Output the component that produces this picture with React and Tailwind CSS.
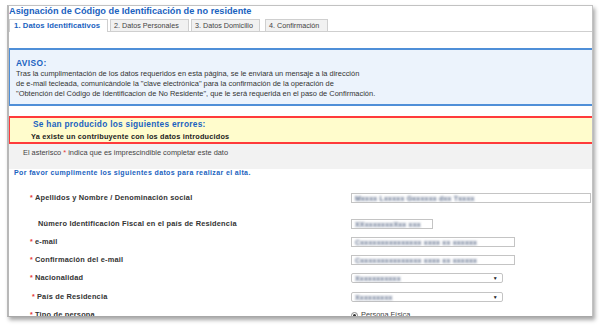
export default function App() {
  const Star = ({ cls = "" }) => (
    <span className={"text-[#e53935] text-[7px] leading-none mr-[2px] relative -top-[1px] " + cls}>*</span>
  );
  const Input = ({ w, text }) => (
    <div className={"h-[10px] border border-[#c4c4c4] bg-white flex items-center pl-[3px] overflow-hidden " + w}>
      <span className="blur-[0.9px] text-[#5a6a88] text-[7px] leading-none whitespace-nowrap">{text}</span>
    </div>
  );
  const Select = ({ text }) => (
    <div className="h-[10px] w-[152px] border border-[#c4c4c4] rounded-[2px] bg-white flex items-center pl-[3px] pr-[4px] justify-between">
      <span className="blur-[0.9px] text-[#5a6a88] text-[7px] leading-none whitespace-nowrap">{text}</span>
      <span className="text-[5px] leading-none text-[#222]">▼</span>
    </div>
  );
  return (
    <div className="w-[599px] h-[325px] bg-white pl-[7px] pt-[5px] font-['Liberation_Sans',Arial,sans-serif]">
      <div className="w-[586px] h-[312px] border border-[#c2c2c2] border-b-[#a8a8a8] border-l-2 border-l-[#b8b8b8] shadow-[2px_3px_4px_rgba(0,0,0,0.35)] overflow-hidden bg-white">
        <div className="h-[12px] flex items-center text-[#1a62c0] font-bold text-[9.2px] leading-none whitespace-nowrap">
          Asignación de Código de Identificación de no residente
        </div>
        <div className="h-[13px] mt-[1px] flex items-end border-b border-[#cfcfcf] text-[7.2px] leading-none whitespace-nowrap">
          <div className="w-[99px] h-[13px] border border-b-0 border-[#cfcfcf] bg-white flex items-center pl-[4px] font-bold text-[7.7px] tracking-[0.1px] text-[#1a62c0] -mb-px">1. Datos Identificativos</div>
          <div className="ml-[2px] w-[79px] h-[12px] border border-b-0 border-[#cfcfcf] bg-[#f1f1f1] flex items-center pl-[3px] text-[#444]">2. Datos Personales</div>
          <div className="ml-[2px] w-[69px] h-[12px] border border-b-0 border-[#cfcfcf] bg-[#f1f1f1] flex items-center pl-[3px] text-[#444]">3. Datos Domicilio</div>
          <div className="ml-[5px] w-[63px] h-[12px] border border-b-0 border-[#cfcfcf] bg-[#f1f1f1] flex items-center pl-[3px] text-[#444]">4. Confirmación</div>
        </div>
        <div className="mt-[16px] h-[58px] bg-[#ecf3fc] border-y-2 border-l border-[#4f8fd8] pl-[6px] pt-[8px]">
          <div className="text-[#1a62c0] font-bold text-[8.4px] tracking-[0.4px] leading-[10px]">AVISO:</div>
          <div className="mt-[1px] text-[#333] text-[7.45px] leading-[10px] whitespace-nowrap">
            <div>Tras la cumplimentación de los datos requeridos en esta página, se le enviará un mensaje a la dirección</div>
            <div>de e-mail tecleada, comunicándole la "clave electrónica" para la confirmación de la operación de</div>
            <div>"Obtención del Código de Identificacion de No Residente", que le será requerida en el paso de Confirmación.</div>
          </div>
        </div>
        <div className="mt-[10px] h-[28px] bg-[#fffccc] border-y-2 border-l border-[#ff3b3b] pl-[23px] flex flex-col justify-center gap-[4px] whitespace-nowrap">
          <div className="text-[#1a62c0] font-bold text-[8.3px] tracking-[0.28px] leading-none">Se han producido los siguientes errores:</div>
          <div className="text-[#222] font-bold text-[7.3px] tracking-[0.2px] leading-none -ml-[2px]">Ya existe un contribuyente con los datos introducidos</div>
        </div>
        <div className="h-[25px] bg-[#f2f2f2] pl-[14px] pt-[5px] text-[#444] text-[7.4px] leading-none whitespace-nowrap">
          El asterisco <span className="text-[#e53935]">*</span> indica que es imprescindible completar este dato
        </div>
        <div className="pl-[5px] text-[#1a62c0] font-bold text-[7px] tracking-[0.38px] leading-[8px] whitespace-nowrap">
          Por favor cumplimente los siguientes datos para realizar el alta.
        </div>
        <div className="pl-[21px] text-[#333] font-bold text-[7.4px] tracking-[0.2px] leading-none whitespace-nowrap">
          <div className="mt-[12px] h-[18px] flex items-center">
            <div className="w-[321px] flex items-center"><Star />Apellidos y Nombre / Denominación social</div>
            <Input w="w-[240px]" text="Mxxxx Lxxxxx Gxxxxxx dxx Txxxx" />
          </div>
          <div className="mt-[8px] h-[18px] flex items-center">
            <div className="w-[321px] flex items-center pl-[8px]">Número Identificación Fiscal en el país de Residencia</div>
            <Input w="w-[82px]" text="XXxxxxxxxXxx xxx" />
          </div>
          <div className="h-[18px] flex items-center">
            <div className="w-[321px] flex items-center"><Star />e-mail</div>
            <Input w="w-[164px]" text="Cxxxxxxxxxxxxxxx xxxx xx xxxxxx" />
          </div>
          <div className="h-[18px] flex items-center">
            <div className="w-[321px] flex items-center"><Star />Confirmación del e-mail</div>
            <Input w="w-[164px]" text="Cxxxxxxxxxxxxxxx xxxx xx xxxxxx" />
          </div>
          <div className="h-[18px] flex items-center">
            <div className="w-[321px] flex items-center"><Star />Nacionalidad</div>
            <Select text="Xxxxxxxxxxx" />
          </div>
          <div className="mt-[1px] h-[18px] flex items-center">
            <div className="w-[321px] flex items-center pl-[2px]"><Star />País de Residencia</div>
            <Select text="Xxxxxxxxx" />
          </div>
          <div className="h-[18px] flex items-center">
            <div className="w-[321px] flex items-center"><Star />Tipo de persona</div>
            <div className="flex items-center gap-[3px] font-normal tracking-normal text-[#444]">
              <span className="w-[7px] h-[7px] rounded-full border border-[#888] bg-white flex items-center justify-center"><span className="w-[3px] h-[3px] rounded-full bg-[#333]"></span></span>
              Persona Física
            </div>
          </div>
        </div>
      </div>
    </div>
  );
}
